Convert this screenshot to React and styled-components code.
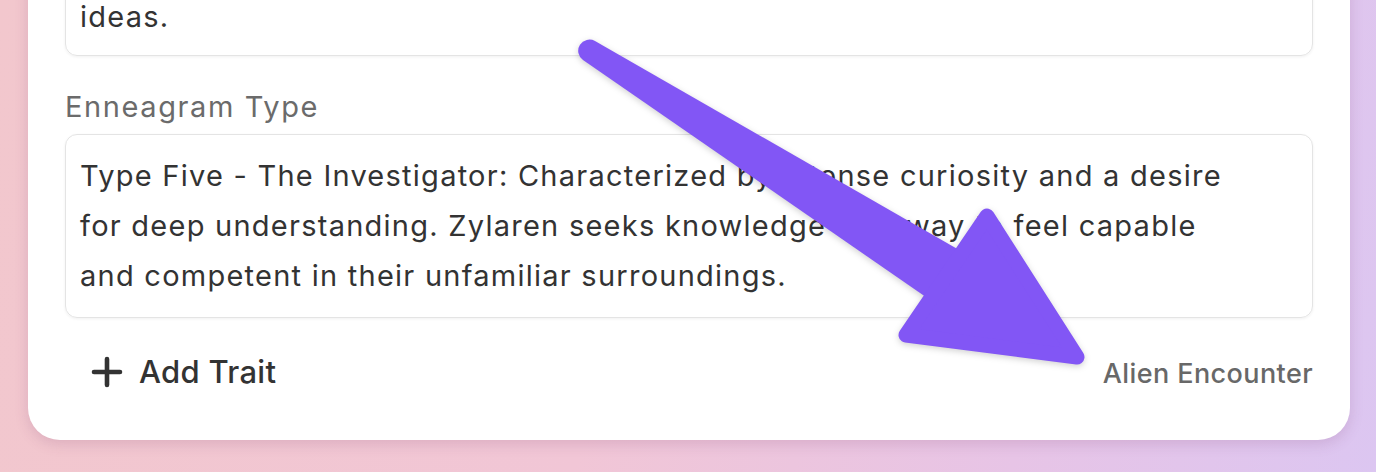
import React from 'react';
import styled, { createGlobalStyle } from 'styled-components';

const GlobalStyle = createGlobalStyle`
  html, body {
    margin: 0;
    padding: 0;
  }
  body {
    font-family: Inter, "Noto Sans", sans-serif;
    -webkit-font-smoothing: antialiased;
  }
`;

const fields = [
  {
    label: null,
    lines: ['ideas.'],
    tight: true,
  },
  {
    label: 'Enneagram Type',
    lines: [
      'Type Five - The Investigator: Characterized by intense curiosity and a desire',
      'for deep understanding. Zylaren seeks knowledge as a way to feel capable',
      'and competent in their unfamiliar surroundings.',
    ],
  },
];

const PlusIcon = () => (
  <svg width="32" height="32" viewBox="0 0 32 32" fill="none">
    <path d="M3 16h26M16 3v26" stroke="#333" strokeWidth="4.6" strokeLinecap="round" />
  </svg>
);

const Arrow = () => (
  <ArrowSvg width="1376" height="472" viewBox="0 0 1376 472">
    <path d="M583 60 L962 322 L994 270 L595 41 A11.25 11.25 0 0 0 583 60 Z" fill="#8256f5" />
    <polygon
      points="987,216 906,335 1077,357"
      fill="#8256f5"
      stroke="#8256f5"
      strokeWidth="15"
      strokeLinejoin="round"
    />
  </ArrowSvg>
);

const App = () => {
  return (
    <>
      <GlobalStyle />
      <Page>
        <Card>
          {fields.map((field, idx) => (
            <Field key={idx}>
              {field.label && <Label>{field.label}</Label>}
              <TextBox $tight={field.tight}>
                {field.lines.map((line, i) => (
                  <Line key={i}>{line}</Line>
                ))}
              </TextBox>
            </Field>
          ))}
          <Footer>
            <AddButton>
              <PlusIcon />
              Add Trait
            </AddButton>
            <Scenario>Alien Encounter</Scenario>
          </Footer>
        </Card>
        <Arrow />
      </Page>
    </>
  );
};

const Page = styled.div`
  position: relative;
  width: 1376px;
  height: 472px;
  overflow: hidden;
  display: flex;
  flex-direction: column;
  justify-content: flex-end;
  padding: 0 26px 32px 28px;
  box-sizing: border-box;
  background: linear-gradient(100deg, #f2c7cd 0%, #f1c6d6 45%, #e7c4e6 75%, #dcc6f1 100%);
`;

const Card = styled.div`
  flex-shrink: 0;
  display: flex;
  flex-direction: column;
  gap: 33px;
  padding: 48px 37px 42px 37px;
  background: #fff;
  border-radius: 32px;
  box-shadow: 0 4px 14px rgba(120, 60, 110, 0.18);
`;

const Field = styled.div`
  display: flex;
  flex-direction: column;
  gap: 9px;
`;

const Label = styled.div`
  font-size: 29px;
  line-height: 36px;
  font-weight: 400;
  letter-spacing: 1.6px;
  color: #6b6b6b;
`;

const TextBox = styled.div`
  border: 1px solid #e4e4e4;
  border-radius: 12px;
  padding: ${(p) => (p.$tight ? '16px 14px 13px' : '16px 14px')};
  box-shadow: 0 1px 3px rgba(0, 0, 0, 0.06);
  font-size: 29px;
  line-height: 50px;
  letter-spacing: 1.25px;
  color: #333;
`;

const Line = styled.div`
  white-space: nowrap;
`;

const Footer = styled.div`
  display: flex;
  align-items: center;
  justify-content: space-between;
  margin-top: -6px;
`;

const AddButton = styled.button`
  display: flex;
  align-items: center;
  gap: 16px;
  padding: 8px 26px;
  border: none;
  background: none;
  font-family: Inter, "Noto Sans", sans-serif;
  font-size: 31px;
  font-weight: 500;
  letter-spacing: 0.3px;
  color: #333;
  cursor: pointer;
`;

const Scenario = styled.span`
  font-size: 27px;
  font-weight: 500;
  letter-spacing: 0.4px;
  color: #686868;
  margin-top: 3px;
`;

const ArrowSvg = styled.svg`
  position: absolute;
  left: 0;
  top: 0;
  pointer-events: none;
  filter: drop-shadow(0 2px 3px rgba(0, 0, 0, 0.18));
`;

export default App;
